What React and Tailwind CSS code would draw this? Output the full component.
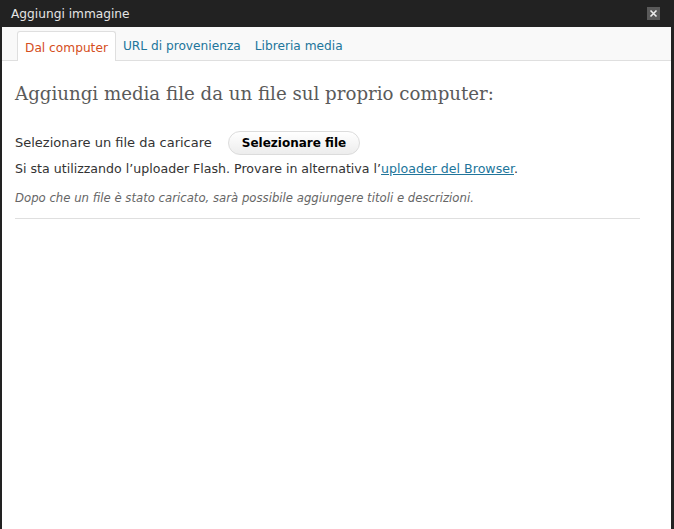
export default function App() {
  return (
    <div className="h-[529px] w-[674px] flex flex-col bg-[#222] overflow-hidden" style={{ fontFamily: '"DejaVu Sans", Verdana, sans-serif' }}>
      <div className="h-[27px] flex items-center justify-between pl-[11px] pr-[14px] shrink-0">
        <span className="text-[12.2px] text-[#e5e5e5] pt-px">Aggiungi immagine</span>
        <button className="w-[13px] h-[13px] bg-[#5a5a5a] flex items-center justify-center">
          <svg width="9" height="9" viewBox="0 0 9 9">
            <path d="M1.5 1.5L7.5 7.5M7.5 1.5L1.5 7.5" stroke="#eee" strokeWidth="1.6" />
          </svg>
        </button>
      </div>
      <div className="flex-1 ml-[2px] mr-[3px] bg-white flex flex-col">
        <div className="h-[34px] bg-[#f9f9f9] border-b border-[#dfdfdf] flex items-end pl-[15px] shrink-0">
          <div className="h-[30px] px-[7px] pt-[3px] bg-white border border-b-0 border-[#dfdfdf] rounded-t-[3px] -mb-px flex items-center text-[12.2px] text-[#d54e21]">
            Dal computer
          </div>
          <div className="h-[30px] px-[7px] pt-[3px] flex items-center text-[12.2px] text-[#21759b]">URL di provenienza</div>
          <div className="h-[30px] px-[7px] pt-[3px] flex items-center text-[12.2px] text-[#21759b]">Libreria media</div>
        </div>
        <div className="px-[13px]">
          <h3 className="mt-[20px] text-[18.2px] text-[#5a5a5a] leading-[26px]" style={{ fontFamily: '"DejaVu Serif", Georgia, serif' }}>
            Aggiungi media file da un file sul proprio computer:
          </h3>
          <div className="mt-[24px] flex items-center text-[13px] text-[#333]">
            <span>Selezionare un file da caricare</span>
            <button className="ml-[16px] h-[24px] px-[13px] rounded-full border border-[#dcdcdc] bg-gradient-to-b from-white to-[#ededed] font-bold text-[12px] text-black">
              Selezionare file
            </button>
          </div>
          <p className="mt-[5px] text-[12.6px] text-[#333]">
            Si sta utilizzando l’uploader Flash. Provare in alternativa l’<a className="text-[#21759b] underline">uploader del Browser</a>.
          </p>
          <p className="mt-[11px] text-[11.7px] italic text-[#666]">
            Dopo che un file è stato caricato, sarà possibile aggiungere titoli e descrizioni.
          </p>
          <div className="mt-[11px] w-[625px] border-t border-[#dfdfdf]" />
        </div>
      </div>
    </div>
  );
}
